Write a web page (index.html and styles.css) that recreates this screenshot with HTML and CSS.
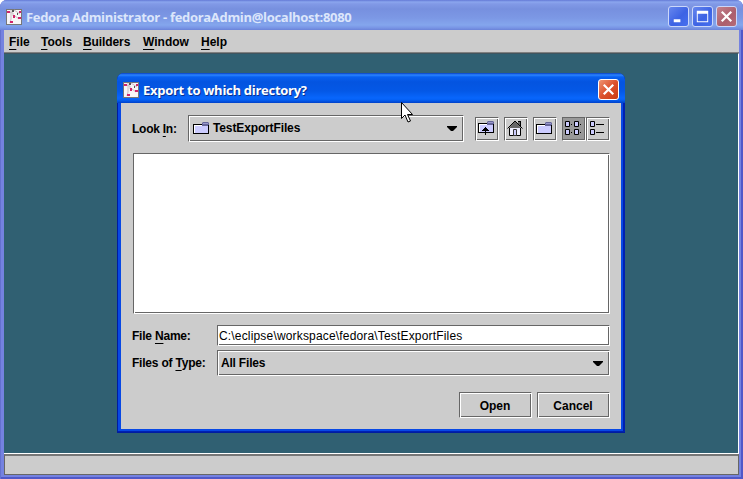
FILE: index.html
```html
<!DOCTYPE html>
<html lang="en">
<head>
<meta charset="utf-8">
<title>Fedora Administrator</title>
<link rel="stylesheet" href="styles.css">
</head>
<body>
<svg class="defs" width="0" height="0">
  <symbol id="app" viewBox="0 0 16 16">
    <path fill="#777" d="M0 0h16v16H0z"/><path fill="#f8f6f7" d="M1 1h14v14H1z"/>
    <path fill="none" stroke="#c8bcc2" d="M2 3l5 1v3M5 1v9l-1 4M8 1l6 4M9 7l4 3"/>
    <path fill="#d1246c" d="M1 2h3v2H1zM7 6h2v3H7zM12 8h3v2h-3zM4 12h3v2H4zM13 2h2v2h-2z"/>
    <path fill="#555" d="M6 1h2v2H6zM11 4h1v2h-1z"/>
  </symbol>
  <symbol id="folder" viewBox="0 0 16 12">
    <path fill="#ccf" d="M1 3h14v8H1z"/><path fill="#fff" d="M1 3h8v1H1zM1 3h1v8H1z"/>
    <path fill="#669" d="M10 0h5l1 1v2H9V1z"/><path fill="#99c" d="M10 1h5v1h-5z"/>
    <path fill="#000" d="M0 2h9v1H0zM0 2h1v10H0zM0 11h16v1H0zM15 3h1v9h-1z"/><path fill="#669" d="M9 3h6v1H9z"/>
  </symbol>
</svg>
<div class="window">
  <header class="titlebar">
    <svg class="app-icon" width="16" height="16"><use href="#app"/></svg>
    <span class="title main-title">Fedora Administrator - fedoraAdmin@localhost:8080</span>
    <div class="controls">
      <svg class="ctl" viewBox="0 0 20 20"><path fill="#fff" d="M5 13h7v3H5z"/></svg>
      <svg class="ctl" viewBox="0 0 20 20"><path fill="#fff" fill-rule="evenodd" d="M4 4h12v12H4zM5 7v8h10V7z"/></svg>
      <svg class="ctl close" viewBox="0 0 20 20"><path stroke="#fff" stroke-width="2.3" d="M5 5l10 10M15 5L5 15"/></svg>
    </div>
  </header>
  <nav class="menu">
    <span class="m-file"><u>F</u>ile</span><span class="m-tools"><u>T</u>ools</span><span class="m-builders"><u>B</u>uilders</span><span class="m-window"><u>W</u>indow</span><span class="m-help"><u>H</u>elp</span>
  </nav>
  <main class="desktop">
    <section class="dialog">
      <header class="dialog-title">
        <svg class="app-icon" width="16" height="16"><use href="#app"/></svg>
        <span class="title dlg-title">Export to which directory?</span>
        <svg class="ctl red" viewBox="0 0 20 20"><path stroke="#fff" stroke-width="2.3" d="M5 5l10 10M15 5L5 15"/></svg>
      </header>
      <div class="content">
        <div class="lookin">
          <label class="l-look">Look <u>I</u>n:</label>
          <div class="bevel combo">
            <svg width="16" height="12"><use href="#folder"/></svg>
            <span class="c-text">TestExportFiles</span>
            <svg class="arrow" width="10" height="5"><path d="M0 0h10v1L6 5H4L0 1z"/></svg>
          </div>
          <div class="tools">
            <div class="bevel tool"><svg width="16" height="14" viewBox="0 0 16 14"><use href="#folder" width="16" height="12"/><path d="M7 6h1v8H7zM6 7h3v1H6zM5 8h5v1H5zM4 9h7v1H4z"/></svg></div>
            <div class="bevel tool"><svg width="16" height="16" viewBox="0 0 16 16"><path fill="#eef" d="M3 8h10v7H3z"/><path fill="#666" d="M8 1l6 7H2zM11 1h2v4h-2z"/><path fill="none" stroke="#000" d="M.5 8.500L8 1l7.500 7.500M2.500 8v7.500h11V8"/><path d="M11 1h2v1h-2zM13 1h1v5h-1z"/><path fill="#ccf" stroke="#333" d="M6.500 9.500h3v6h-3z"/></svg></div>
            <div class="bevel tool"><svg width="16" height="12"><use href="#folder"/></svg></div>
            <div class="views">
              <div class="bevel tool pressed"><svg width="16" height="14" viewBox="0 0 16 14"><path fill="#ccf" stroke="#000" d="M.5.5h4v5h-4zM9.500.5h4v5h-4zM.5 8.500h4v5h-4zM9.500 8.500h4v5h-4z"/><path d="M6 3h1v1H6zM15 3h1v1h-1zM6 11h1v1H6zM15 11h1v1h-1z"/></svg></div>
              <div class="bevel tool"><svg width="14" height="14" viewBox="0 0 14 14"><path fill="#ccf" stroke="#000" d="M.5.5h4v5h-4zM.5 8.500h4v5h-4z"/><path d="M6 3h8v1H6zM6 11h8v1H6z"/></svg></div>
            </div>
          </div>
        </div>
        <div class="bevel list"></div>
        <div class="row name-row"><label class="l-name">File <u>N</u>ame:</label><div class="bevel field"><span class="path">C:\eclipse\workspace\fedora\TestExportFiles</span></div></div>
        <div class="row type-row"><label class="l-type">Files of <u>T</u>ype:</label><div class="bevel combo type"><span class="t-text">All Files</span><svg class="arrow" width="10" height="5"><path d="M0 0h10v1L6 5H4L0 1z"/></svg></div></div>
        <div class="actions"><div class="bevel btn"><span class="b-open">Open</span></div><div class="bevel btn"><span class="b-cancel">Cancel</span></div></div>
      </div>
    </section>
  </main>
  <footer class="status"></footer>
</div>
<svg class="cursor" width="12" height="21" viewBox="0 0 12 21"><path fill="#fff" stroke="#000" d="M.5.500v16l3.500-3.500 3 7 2.500-1-3-6.500h5z"/></svg>
</body>
</html>
```
FILE: styles.css
```css
* { box-sizing: border-box; }
body {
  margin: 0;
  width: 743px;
  height: 479px;
  overflow: hidden;
  background: #fff;
  font: bold 12px/16px "Liberation Sans", sans-serif;
  color: #000;
}
svg { display: block; flex: none; }
span, label { white-space: nowrap; }
.defs, .cursor { position: absolute; }
.cursor { left: 401px; top: 102px; }
u { text-decoration-thickness: 1px; text-underline-offset: 3px; text-decoration-skip-ink: none; }

.window {
  height: 479px;
  display: flex;
  flex-direction: column;
  padding: 0 4px 4px;
  border-radius: 7px 7px 0 0;
  background: #7482e0;
  box-shadow: inset 1px 0 #6471cf, inset -2px -2px #5058c8;
}
.titlebar, .dialog-title { display: flex; align-items: center; }
.titlebar {
  height: 30px;
  margin: 0 -4px;
  padding: 3px 6px 0 6px;
  border-radius: 7px 7px 0 0;
  background: linear-gradient(#6479d6 0, #8ba6ee 2px, #8199e6 4px, #7790df 9px, #7c98e5 18px, #84a6ed 25px, #7894e5 28px, #6b83d8 30px);
}
.title { font: bold 13px/18px "Open Sans", sans-serif; }
.main-title { margin-left: 4px; color: #dce6fb; letter-spacing: -0.31px; }
.controls { display: flex; gap: 3px; margin-left: auto; }
.ctl {
  width: 21px;
  height: 21px;
  border: 1px solid #cbd7fa;
  border-radius: 3px;
  background: linear-gradient(135deg, #6787ee, #3d63e4 55%, #4770ef);
}
.close { background: linear-gradient(135deg, #c4838d, #ac5e6d 60%, #b66c78); }
.red { margin-left: auto; border-color: #fff; background: linear-gradient(135deg, #ee9473, #dc512c 50%, #c83c14); }

.menu {
  height: 23px;
  display: flex;
  padding: 4px 0 0 5px;
  background: #ccc;
  border-bottom: 1px solid #808080;
}
.menu span { width: 32px; }
.menu .m-tools { width: 42px; }
.menu .m-builders { width: 60px; letter-spacing: -0.1px; }
.menu .m-window { width: 58px; }

.desktop {
  flex: 1;
  padding: 19px 0 0 113px;
  background: #306072;
  border-top: 1px solid #40555f;
  border-right: 1px solid #fff;
  border-bottom: 1px solid #fff;
}
.status { height: 21px; background: #ccc; border: 1px solid #666; border-top: 2px solid #777; }

.dialog {
  width: 508px;
  height: 360px;
  padding: 0 4px 4px;
  border-radius: 7px 7px 0 0;
  background: #0848e4;
  box-shadow: inset 1px -1px #001ca0, inset -2px -2px #0020b0;
}
.dialog-title {
  height: 30px;
  margin: 0 -4px;
  padding: 3px 6px 0;
  border-radius: 7px 7px 0 0;
  background: linear-gradient(#0840c0 0, #2c84ff 2px, #0860f0 4px, #0454e0 9px, #0458e6 18px, #0866fc 25px, #0460f4 27px, #0040c8 30px);
}
.dlg-title { margin-left: 4px; color: #fff; text-shadow: 1px 1px #0a3290; letter-spacing: -0.28px; }

.content { width: 500px; height: 326px; padding: 12px 11px 11px; background: #ccc; }
.bevel {
  border: 1px solid;
  border-color: #666 #fff #fff #666;
  box-shadow: inset 1px 1px #fff, inset -1px -1px #666;
}
.lookin, .row { display: flex; align-items: center; }
.lookin { height: 27px; }
.lookin label { width: 56px; letter-spacing: -0.25px; }
.combo { display: flex; align-items: center; width: 276px; height: 27px; padding: 0 6px 1px 4px; }
.c-text { margin-left: 4px; letter-spacing: -0.13px; }
.arrow { margin-left: auto; }
.tools { display: flex; gap: 5px; margin-left: 11px; }
.tool { width: 24px; height: 24px; padding: 0 2px 1px 0; display: flex; align-items: center; justify-content: center; }
.views { display: flex; }
.pressed { background: #999; box-shadow: inset -1px -1px #666; }
.list { height: 161px; margin: 11px 0 0 1px; background: #fff; }
.row label { width: 85px; flex: none; letter-spacing: -0.21px; }
.name-row { height: 21px; margin-top: 11px; }
.field { flex: 1; height: 21px; padding: 2px 0 0 1px; background: #fff; font-weight: normal; line-height: 16px; letter-spacing: 0.17px; }
.type-row { height: 26px; margin-top: 4px; }
.type { flex: 1; height: 26px; padding: 0 6px 0 3px; }
.t-text { letter-spacing: -0.2px; }
.actions { display: flex; justify-content: flex-end; gap: 5px; margin-top: 16px; }
.btn { width: 73px; height: 26px; padding: 1px 1px 0 0; display: flex; align-items: center; justify-content: center; }
```
